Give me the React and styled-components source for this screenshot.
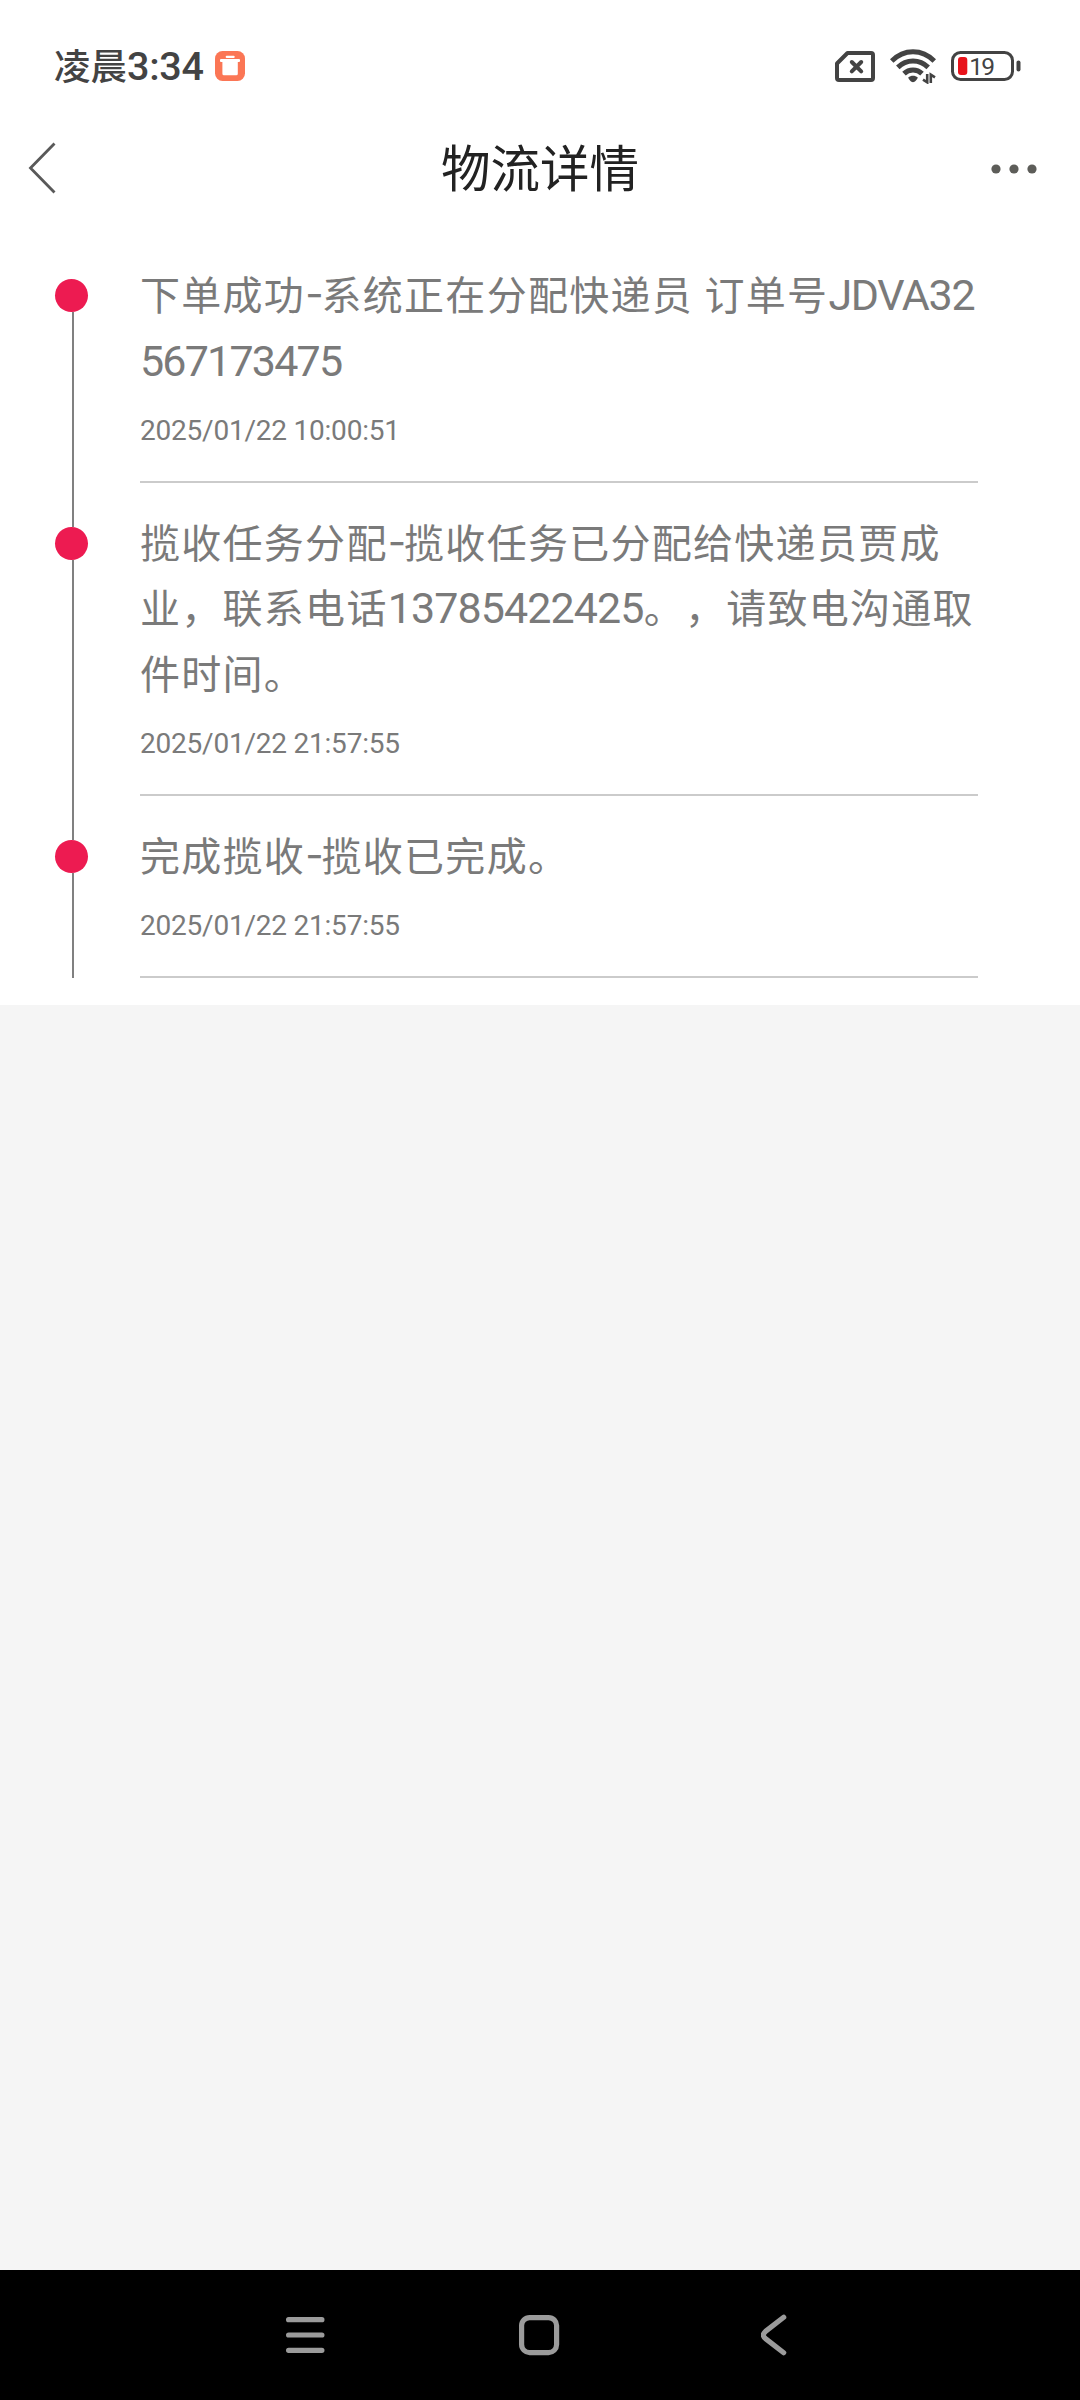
import React from 'react';
import styled, { createGlobalStyle } from 'styled-components';

const GlobalStyle = createGlobalStyle`
    body {
        margin: 0;
        background-color: #f5f5f5;
        font-family: Roboto, "Noto Sans CJK SC", sans-serif;
    }
`;

const Screen = styled.div`
    display: flex;
    flex-direction: column;
    width: 1080px;
    height: 2400px;
    overflow: hidden;
    background-color: #f5f5f5;
`;

const StatusBar = styled.div`
    display: flex;
    align-items: center;
    justify-content: space-between;
    box-sizing: border-box;
    height: 104px;
    padding: 28px 59px 0 54px;
    background-color: #fff;
    color: #434343;
`;

const StatusGroup = styled.div`
    display: flex;
    align-items: center;
`;

const Clock = styled.div`
    display: flex;
    align-items: baseline;
    margin-right: 11px;
    line-height: 40px;
    font-weight: 500;
`;

const ClockPeriod = styled.span`
    font-family: "Noto Sans CJK SC", sans-serif;
    font-size: 36.5px;
`;

const ClockTime = styled.span`
    font-size: 39.5px;
    letter-spacing: -0.3px;
`;

const StatusIcon = styled.svg`
    display: block;
    margin-left: ${props => props.$gap || 0}px;
`;

const TitleBar = styled.header`
    display: grid;
    grid-template-columns: 120px 1fr 120px;
    align-items: center;
    box-sizing: border-box;
    height: 131px;
    padding-bottom: 2px;
    background-color: #fff;
`;

const Title = styled.h1`
    margin: 0;
    padding-bottom: 5px;
    color: #222;
    font-family: "Noto Sans CJK SC", sans-serif;
    font-size: 49.5px;
    font-weight: 400;
    line-height: 60px;
    text-align: center;
`;

const IconButton = styled.button`
    display: flex;
    justify-content: ${props => props.$align || 'flex-start'};
    padding: ${props => props.$padding || 0};
    border: 0;
    background: none;
`;

const Timeline = styled.main`
    padding-bottom: 27px;
    background-color: #fff;
`;

const Row = styled.section`
    display: grid;
    grid-template-columns: 140px 838px;
`;

const Rail = styled.div`
    display: flex;
    flex-direction: column;
`;

const RailLine = styled.div`
    width: 2px;
    height: ${props => props.$height || 'auto'};
    flex-grow: ${props => (props.$height ? 0 : 1)};
    margin-left: 72px;
    background-color: ${props => (props.$hidden ? 'transparent' : '#808080')};
`;

const Dot = styled.div`
    width: 33px;
    height: 33px;
    margin-left: 55px;
    border-radius: 50%;
    background-color: #ed1b51;
`;

const Details = styled.div`
    box-sizing: border-box;
    padding: 26px 0 30px;
    border-bottom: 2px solid #cbcbcb;
    color: #7a7a7a;
`;

const Line = styled.div`
    height: 65.8px;
    line-height: 65.8px;
    white-space: pre;
    font-family: "Noto Sans CJK SC", sans-serif;
    font-size: 40px;
    letter-spacing: 1.28px;
    text-spacing-trim: space-all;
`;

const Latin = styled.span`
    font-family: Roboto, sans-serif;
    font-size: 43px;
    line-height: 1;
    letter-spacing: ${props => props.$spacing}px;
`;

const Dash = styled.span`
    font-family: Inter, sans-serif;
    font-size: 40px;
    line-height: 1;
    letter-spacing: -2px;
    vertical-align: 2px;
`;

const Time = styled.div`
    margin-top: 17px;
    height: 41px;
    line-height: 41px;
    font-size: 28px;
    letter-spacing: -0.22px;
`;

const NavBar = styled.nav`
    display: flex;
    align-items: center;
    box-sizing: border-box;
    height: 130px;
    margin-top: auto;
    padding-left: 285px;
    background-color: #000;
`;

const NavIcon = styled.svg`
    display: block;
    margin-right: ${props => props.$gap || 0}px;
    fill: none;
    stroke: #9b9b9b;
    stroke-width: 5.2;
    stroke-linecap: round;
    stroke-linejoin: round;
`;

const entries = [
    {
        time: '2025/01/22 10:00:51',
        lines: [
            <>下单成功<Dash>-</Dash>系统正在分配快递员<Latin $spacing={0.8}> </Latin>订单号<Latin $spacing={-1.3}>JDVA32</Latin></>,
            <Latin $spacing={-1.8}>567173475</Latin>,
        ],
    },
    {
        time: '2025/01/22 21:57:55',
        lines: [
            <>揽收任务分配<Dash>-</Dash>揽收任务已分配给快递员贾成</>,
            <>业，联系电话<Latin $spacing={-0.9}>13785422425</Latin>。，请致电沟通取</>,
            <>件时间。</>,
        ],
    },
    {
        time: '2025/01/22 21:57:55',
        lines: [
            <>完成揽收<Dash>-</Dash>揽收已完成。</>,
        ],
    },
];

const TrashBadge = () => (
    <StatusIcon width="30" height="30" viewBox="0 0 30 30">
        <rect width="30" height="30" rx="7.5" fill="#fb7655" />
        <rect x="10.700" y="4.800" width="9" height="2.300" rx="1" fill="#fff" />
        <rect x="5" y="8" width="20" height="3" rx="1" fill="#fff" />
        <path d="M7.400 10.500h15.400v12.300a1.500 1.500 0 0 1-1.500 1.500H8.900a1.500 1.500 0 0 1-1.500-1.500z" fill="#fff" />
    </StatusIcon>
);

const SimIcon = () => (
    <StatusIcon width="40" height="31" viewBox="0 0 40 31" fill="none" stroke="#434343" strokeWidth="4" strokeLinejoin="round">
        <path d="M12.500 2H36a2 2 0 0 1 2 2v23a2 2 0 0 1-2 2H4a2 2 0 0 1-2-2V12.500z" />
        <path d="M16.800 11l9.400 9.400M26.200 11l-9.400 9.400" strokeLinecap="round" />
    </StatusIcon>
);

const WifiIcon = () => (
    <StatusIcon $gap={15} width="46" height="36" viewBox="0 0 46 36" fill="none" stroke="#434343" strokeWidth="5">
        <path d="M1.700 13C14 .6 32 .6 44.300 13" />
        <path d="M7.800 19.400c8.600-8.400 21.800-8.400 30.400 0" />
        <path d="M14 25.600c5-4.900 13-4.900 18 0" />
        <path d="M18.200 29.600c2.800-2.600 6.800-2.600 9.600 0c-.5 2-2.800 4.700-4.800 4.700s-4.300-2.700-4.800-4.700z" fill="#434343" stroke="none" />
        <path d="M37.200 26v8.300l-4.200-2.600M40.800 35v-8.300l4.200 2.600" strokeWidth="2.600" />
    </StatusIcon>
);

const BatteryIcon = () => (
    <StatusIcon $gap={15} width="70" height="30" viewBox="0 0 70 30">
        <rect x="1.500" y="1.500" width="60" height="27" rx="8" fill="none" stroke="#434343" strokeWidth="3" />
        <rect x="65.500" y="9.500" width="4" height="11" rx="2" fill="#434343" />
        <rect x="7" y="6" width="9.300" height="18" rx="3" fill="#e8131b" />
        <text x="18.300" y="23.700" fontFamily="Roboto, sans-serif" fontSize="24.500" letterSpacing="-1.800" fill="#434343">19</text>
    </StatusIcon>
);

const Entry = ({ entry, first }) => (
    <Row>
        <Rail>
            <RailLine $height="44px" $hidden={first} />
            <Dot />
            <RailLine />
        </Rail>
        <Details>
            {entry.lines.map((line, i) => <Line key={i}>{line}</Line>)}
            <Time>{entry.time}</Time>
        </Details>
    </Row>
);

const App = () => (
    <Screen>
        <GlobalStyle />
        <StatusBar>
            <StatusGroup>
                <Clock>
                    <ClockPeriod>凌晨</ClockPeriod>
                    <ClockTime>3:34</ClockTime>
                </Clock>
                <TrashBadge />
            </StatusGroup>
            <StatusGroup>
                <SimIcon />
                <WifiIcon />
                <BatteryIcon />
            </StatusGroup>
        </StatusBar>
        <TitleBar>
            <IconButton $padding="0 0 1px 28px" aria-label="返回">
                <svg width="28" height="52" viewBox="0 0 28 52" fill="none" stroke="#595959" strokeWidth="2.800">
                    <path d="M26.500 1.500L2.500 26L26.500 50.500" />
                </svg>
            </IconButton>
            <Title>物流详情</Title>
            <IconButton $align="flex-end" $padding="0 43px 0 0" aria-label="更多">
                <svg width="46" height="10" viewBox="0 0 46 10" fill="#5d5d59">
                    <circle cx="5" cy="5" r="4.600" />
                    <circle cx="23" cy="5" r="4.600" />
                    <circle cx="41" cy="5" r="4.600" />
                </svg>
            </IconButton>
        </TitleBar>
        <Timeline>
            {entries.map((entry, i) => <Entry key={i} entry={entry} first={i === 0} />)}
        </Timeline>
        <NavBar>
            <NavIcon $gap={193} width="40" height="40" viewBox="0 0 40 40">
                <path d="M3.600 4.700h33.300M3.600 20h33.300M3.600 35.300h33.300" />
            </NavIcon>
            <NavIcon $gap={201} width="42" height="42" viewBox="0 0 42 42">
                <rect x="3.600" y="3.600" width="35" height="35" rx="8" />
            </NavIcon>
            <NavIcon width="28" height="42" viewBox="0 0 28 42">
                <path d="M22.700 3.300L4.500 17.400Q.2 21 4.500 24.600L22.700 38.700" />
            </NavIcon>
        </NavBar>
    </Screen>
);

export default App;
